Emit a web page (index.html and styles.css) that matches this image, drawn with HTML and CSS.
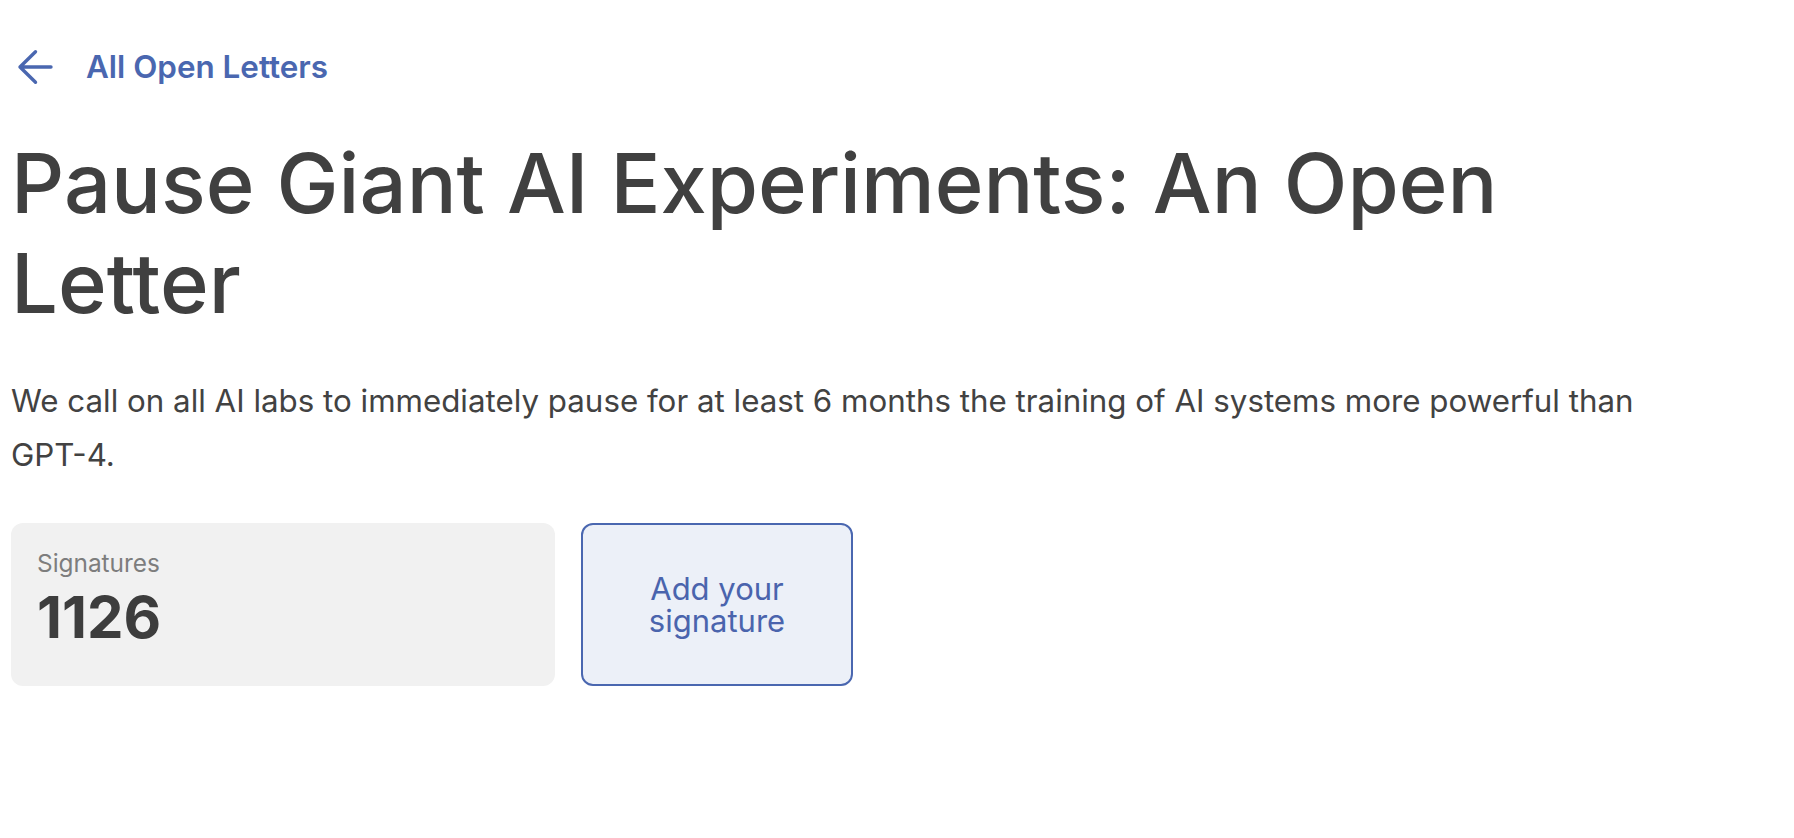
FILE: index.html
```html
<!DOCTYPE html>
<html lang="en">
<head>
<meta charset="utf-8">
<title>Pause Giant AI Experiments: An Open Letter</title>
<link rel="stylesheet" href="styles.css">
</head>
<body>
<main class="page">
  <a class="back" href="#">
    <svg class="back-icon" viewBox="0 0 36 36" width="36" height="36" aria-hidden="true">
      <path d="M34 18H3 M18.5 2.8L3 18L18.5 33.2" fill="none" stroke="currentColor" stroke-width="3.4" stroke-linecap="round" stroke-linejoin="round"/>
    </svg>
    <span>All Open Letters</span>
  </a>
  <h1 class="title">Pause Giant AI Experiments: An Open Letter</h1>
  <p class="lead">We call on all AI labs to immediately pause for at least 6 months the training of AI systems more powerful than GPT-4.</p>
  <div class="actions">
    <div class="stat">
      <div class="stat-label">Signatures</div>
      <div class="stat-value">1126</div>
    </div>
    <button class="sign" type="button">Add your signature</button>
  </div>
</main>
</body>
</html>
```

FILE: styles.css
```css
* { box-sizing: border-box; }

html, body {
  margin: 0;
  background: #ffffff;
}

body {
  font-family: Inter, "Noto Sans", "Liberation Sans", sans-serif;
  color: #404040;
}

.page {
  max-width: 1691px;
  padding: 47px 11px 40px;
}

.back {
  display: flex;
  align-items: center;
  height: 40px;
  gap: 33px;
  padding-left: 6px;
  color: #4a67b0;
  text-decoration: none;
  font-size: 31.4px;
  font-weight: 600;
  line-height: 40px;
  width: max-content;
}

.back-icon {
  display: block;
  flex: none;
}

.title {
  margin: 46px 0 0;
  font-size: 83px;
  line-height: 100px;
  font-weight: 500;
  color: #404040;
  letter-spacing: 0;
}

.lead {
  margin: 41px 0 0;
  font-size: 31.3px;
  line-height: 54px;
  font-weight: 400;
  color: #424242;
}

.actions {
  margin-top: 41px;
  display: flex;
  gap: 26px;
}

.stat {
  width: 544px;
  height: 163px;
  background: #f1f1f1;
  border-radius: 12px;
  padding: 26px 26px 0;
}

.stat-label {
  font-size: 24.4px;
  line-height: 1.2;
  color: #7d7d7d;
}

.stat-value {
  margin-top: 5px;
  font-size: 58px;
  line-height: 1.2;
  font-weight: 700;
  color: #3d3d3d;
}

.sign {
  width: 272px;
  height: 163px;
  padding: 0 40px;
  border: 2px solid #4a67b0;
  border-radius: 12px;
  background: #ecf0f8;
  color: #4a64ad;
  font-family: inherit;
  font-size: 31px;
  line-height: 32px;
  font-weight: 400;
  text-align: center;
  cursor: pointer;
}
```
